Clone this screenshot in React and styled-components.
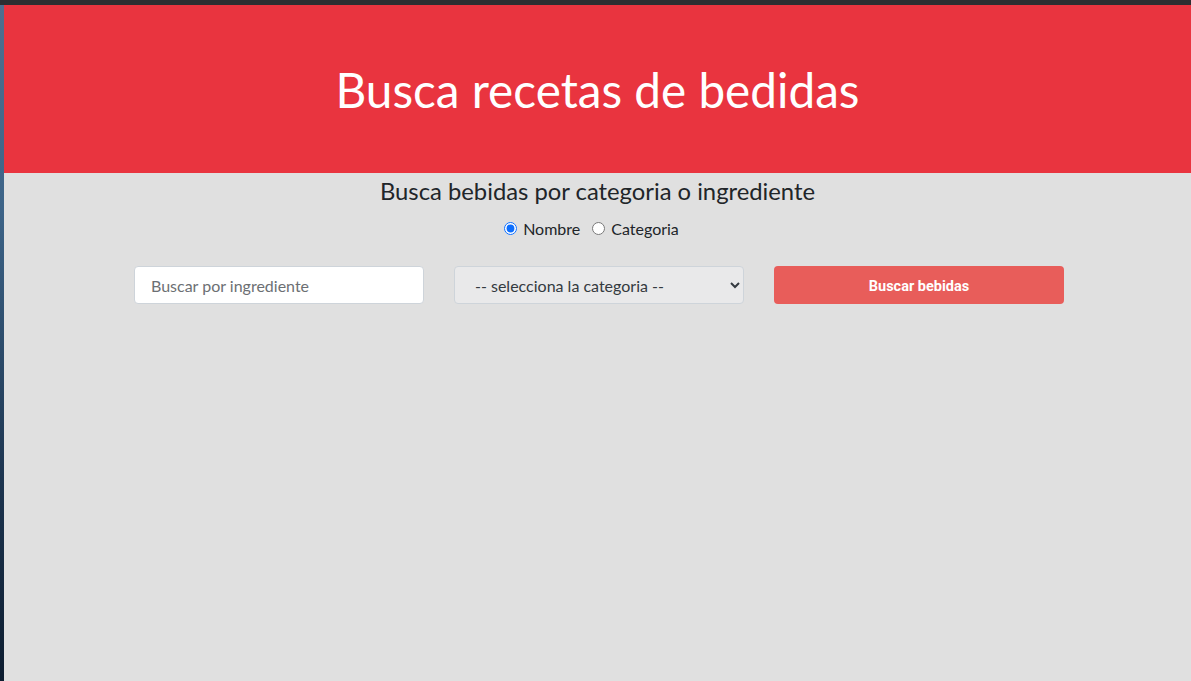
import React from 'react';
import styled, { createGlobalStyle } from 'styled-components';

const GlobalStyle = createGlobalStyle`
  html, body {
    margin: 0;
    padding: 0;
    height: 100%;
    background: #2d2e31;
  }
  #root {
    height: 100%;
  }
  * {
    box-sizing: border-box;
  }
`;

const Frame = styled.div`
  display: flex;
  height: 681px;
  padding-top: 5px;
  background: #2d2e31;
  overflow: hidden;
`;

const Desktop = styled.div`
  width: 4px;
  flex-shrink: 0;
  background: linear-gradient(180deg, #4f6f8f 0%, #3d6488 30%, #1d3550 70%, #0d1d30 100%);
`;

const Page = styled.div`
  flex: 1;
  display: flex;
  flex-direction: column;
  background: #e0e0e0;
  font-family: Lato, "Open Sans", sans-serif;
  color: #212529;
`;

const Header = styled.header`
  display: flex;
  justify-content: center;
  align-items: center;
  height: 168px;
  background: #e9343f;
`;

const Title = styled.h1`
  margin: 0;
  font-size: 47.7px;
  font-weight: 400;
  color: #ffffff;
`;

const Subtitle = styled.h2`
  margin: 4px 0 0;
  text-align: center;
  font-size: 23.8px;
  font-weight: 400;
  line-height: 29px;
`;

const RadioGroup = styled.div`
  display: flex;
  justify-content: center;
  gap: 12px;
  margin-top: 13px;
  padding-right: 12px;
  font-size: 16px;
  line-height: 19px;
`;

const RadioLabel = styled.label`
  display: flex;
  align-items: center;
  gap: 4px;

  input {
    margin: 0 2px 0 0;
    width: 13px;
    height: 13px;
    accent-color: #0d6efd;
  }
`;

const Form = styled.form`
  display: grid;
  grid-template-columns: repeat(3, 290px);
  gap: 30px;
  justify-content: center;
  margin-top: 28px;
  padding-left: 3px;
`;

const Field = styled.input`
  height: 38px;
  padding: 0 16px;
  border: 1px solid #ced4da;
  border-radius: 4px;
  background: #ffffff;
  font-family: Lato, sans-serif;
  font-size: 16px;
  color: #495057;

  &::placeholder {
    color: #6c6f73;
  }
`;

const Select = styled.select`
  height: 38px;
  padding: 0 16px;
  border: 1px solid #ced4da;
  border-radius: 4px;
  background: #e9e9ea;
  font-family: Lato, sans-serif;
  font-size: 16px;
  color: #343a40;
`;

const Button = styled.button`
  height: 38px;
  padding-top: 3px;
  border: none;
  border-radius: 4px;
  background: #e85d5a;
  color: #ffffff;
  font-family: Roboto, sans-serif;
  font-weight: 700;
  font-size: 14.5px;
  cursor: pointer;
`;

const App = () => (
  <>
    <GlobalStyle />
    <Frame>
      <Desktop />
      <Page>
        <Header>
          <Title>Busca recetas de bedidas</Title>
        </Header>
        <Subtitle>Busca bebidas por categoria o ingrediente</Subtitle>
        <RadioGroup>
          <RadioLabel>
            <input type="radio" name="tipo" defaultChecked /> Nombre
          </RadioLabel>
          <RadioLabel>
            <input type="radio" name="tipo" /> Categoria
          </RadioLabel>
        </RadioGroup>
        <Form onSubmit={e => e.preventDefault()}>
          <Field type="text" placeholder="Buscar por ingrediente" />
          <Select defaultValue="">
            <option value="">-- selecciona la categoria --</option>
          </Select>
          <Button type="submit">Buscar bebidas</Button>
        </Form>
      </Page>
    </Frame>
  </>
);

export default App;
